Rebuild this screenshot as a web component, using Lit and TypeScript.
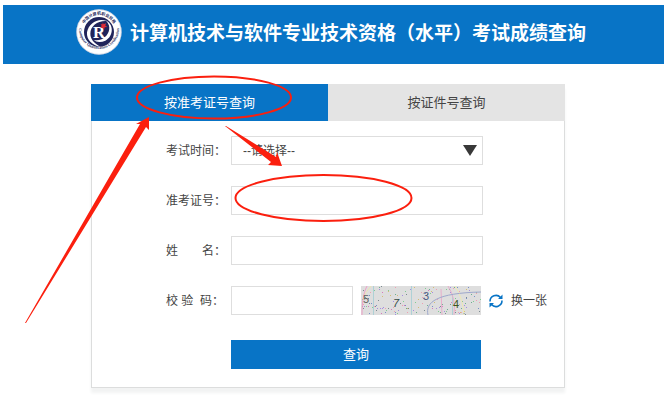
import { LitElement, html, css, svg } from "lit";
import { customElement, state } from "lit/decorators.js";

@customElement("site-emblem")
class SiteEmblem extends LitElement {
  static styles = css`
    :host { display: block; flex: none; width: 46px; height: 46px; }
    svg { display: block; width: 100%; height: 100%; }
    .ring { font: bold 12px "Noto Sans CJK SC", sans-serif; fill: #2a2d62; }
    .latin { font: bold 12px "Liberation Serif", serif; fill: #2a2d62; }
    .mono { font: bold 50px "Liberation Serif", serif; fill: #fff; }
  `;
  render() {
    return html`<svg viewBox="0 0 138 138" role="img" aria-label="计算机职业资格">
      <defs>
        <path id="upper" d="M20 58 A50 50 0 0 1 118 58" />
        <path id="lower" d="M9 60 A60 60 0 1 0 129 60" />
      </defs>
      <circle cx="69" cy="69" r="68" fill="#fff" />
      <circle cx="69" cy="69" r="67" fill="none" stroke="#7c8bb4" stroke-width="1" />
      <text class="ring"><textPath href="#upper" startOffset="50%" text-anchor="middle">中国计算机职业资格</textPath></text>
      <text class="latin"><textPath href="#lower" startOffset="50%" text-anchor="middle">Computer Qualification Certification</textPath></text>
      <circle cx="69" cy="69" r="45" fill="#20245a" />
      <path d="M92 36 C66 26 38 42 33 70 C31 92 48 110 74 114 C54 102 43 90 43 74 C43 50 66 34 92 36Z" fill="#fff" />
      <path d="M88 34 C114 44 114 82 88 95 C75 101 61 100 53 93 C66 96 80 92 91 80 C104 65 103 46 88 34Z" fill="#fff" />
      <text class="mono" x="51" y="87">R</text>
      <path d="M80 40 l3 6 7 -3 -2 7 6 4 -8 1 -2 7 -4 -6 -7 1 4 -6 -3 -5 6 0z" fill="#e02b35" />
    </svg>`;
  }
}

@customElement("captcha-picture")
class CaptchaPicture extends LitElement {
  static styles = css`
    :host { display: block; flex: none; width: 120px; height: 29px; }
    svg { display: block; width: 100%; height: 100%; background: #dedede; }
    text { font: 11px "Liberation Sans", sans-serif; }
    .slanted { font-style: italic; }
  `;
  private specks() {
    const tints = ["#d779bd", "#6cae91", "#7990c9", "#a68de0", "#d4bd75", "#7c8a90", "#ef9fb1", "#81cc92"];
    let seed = 4217;
    const next = () => (seed = (seed * 16807) % 2147483647) / 2147483647;
    return Array.from({ length: 150 }, () => {
      const x = Math.floor(next() * 120);
      const y = Math.floor(next() * 29);
      const tint = tints[Math.floor(next() * tints.length)];
      return svg`<rect x=${x} y=${y} width="1" height="1" fill=${tint} />`;
    });
  }
  render() {
    return html`<svg viewBox="0 0 120 29" role="img" aria-label="校验码图片">
      ${this.specks()}
      <g fill="none" stroke-width="1">
        <path d="M6 0 C2 8 1 18 1 29" stroke="#eda0c6" />
        <path d="M10 0 Q4 6 2 14" stroke="#ece5b3" />
        <path d="M12.500 0V29M50.500 0V29M91.500 8V29" stroke="#aed1d6" />
        <path d="M87 0 Q95 12 93 29M80 3L81 29" stroke="#e7aecb" />
        <path d="M94 0 Q102 12 103 29" stroke="#eee9b4" />
        <path d="M67 29 C64 16 76 7 120 6" stroke="#9ea8cc" />
      </g>
      <text x="2" y="17" fill="#606060">5</text>
      <text class="slanted" x="32" y="21" fill="#344c46">7</text>
      <text x="62" y="14" fill="#4e5b80">3</text>
      <text x="92" y="22" fill="#40561d">4</text>
    </svg>`;
  }
}

@customElement("app-root")
class AppRoot extends LitElement {
  @state() private tab = 0;

  static styles = css`
    :host {
      display: block;
      position: relative;
      background: #fff;
      color: #444;
      font: 12px/18px "Liberation Sans", "Noto Sans CJK SC", sans-serif;
    }
    * { box-sizing: border-box; }
    button, input, select { font: inherit; color: inherit; margin: 0; border-radius: 0; }
    button { border: 0; padding: 0; cursor: pointer; }
    .page { padding: 5px 7px 20px 3px; }
    .banner {
      display: flex;
      align-items: center;
      gap: 8px;
      height: 59px;
      padding: 0 16px 5px 73px;
      background: #0874c6;
      color: #fff;
    }
    .title { margin: 0; padding-top: 3px; font-size: 19px; line-height: 28px; font-weight: bold; white-space: nowrap; }
    .card {
      margin: 20px 99px 0 88px;
      border: 1px solid #dcdddd;
      border-top: 0;
      box-shadow: 0 5px 3px #f2f3f3;
    }
    .tabs { display: flex; margin: 0 -1px; }
    .tab { flex: 1; height: 37px; background: #e4e4e4; font-size: 13px; line-height: 36px; }
    .tab.active { background: #0874c6; color: #fff; }
    .form {
      display: grid;
      grid-template-columns: 60px minmax(0, 1fr) 59px;
      align-items: center;
      gap: 21px 5px;
      padding: 15px 17px 18px 74px;
    }
    .label { grid-column: 1; white-space: pre; }
    .field {
      grid-column: 2;
      width: 100%;
      height: 29px;
      padding: 0 11px;
      border: 1px solid #dedede;
      background: #fff;
      outline-color: #0874c6;
    }
    .picker { grid-column: 2; display: grid; align-items: center; }
    .picker > * { grid-area: 1 / 1; }
    .picker .field { appearance: none; }
    .caret { justify-self: end; margin-right: 6px; width: 14px; height: 11px; pointer-events: none; }
    .check { grid-column: 2 / -1; display: flex; align-items: center; gap: 8px; }
    .check .field { flex: 1; width: auto; min-width: 0; }
    .refresh { display: flex; align-items: center; gap: 8px; background: none; white-space: nowrap; }
    .refresh svg { width: 14px; height: 14px; }
    .submit {
      grid-column: 2;
      height: 29px;
      margin: 4px 2px 0 0;
      background: #0874c6;
      color: #fff;
      font-size: 13px;
    }
    .marks { position: absolute; left: 0; top: 0; width: 100%; pointer-events: none; }
  `;

  render() {
    return html`
      <div class="page">
        <header class="banner">
          <site-emblem></site-emblem>
          <h1 class="title">计算机技术与软件专业技术资格（水平）考试成绩查询</h1>
        </header>
        <main class="card">
          <div class="tabs" role="tablist">
            ${["按准考证号查询", "按证件号查询"].map(
              (name, i) => html`<button role="tab" class=${this.tab === i ? "tab active" : "tab"}
                aria-selected=${this.tab === i ? "true" : "false"} @click=${() => (this.tab = i)}>${name}</button>`
            )}
          </div>
          <form class="form" @submit=${(e: Event) => e.preventDefault()}>
            <label class="label" for="time">考试时间：</label>
            <div class="picker">
              <select class="field" id="time"><option>--请选择--</option></select>
              <svg class="caret" viewBox="0 0 14 11" aria-hidden="true"><path d="M0 0H14L7 11Z" fill="#383838" /></svg>
            </div>
            <label class="label" for="ticket">准考证号：</label>
            <input class="field" id="ticket" type="text" />
            <label class="label" for="name">姓　　名：</label>
            <input class="field" id="name" type="text" />
            <label class="label" for="code">校 验  码：</label>
            <div class="check">
              <input class="field" id="code" type="text" />
              <captcha-picture></captcha-picture>
              <button class="refresh" type="button">
                <svg viewBox="0 0 14 14" aria-hidden="true">
                  <path d="M1 7.500A6 6 0 0 1 11.500 3.500M13 6.500A6 6 0 0 1 2.500 10.500" fill="none" stroke="#0874c6" stroke-width="1.600" />
                  <path d="M13.500 .5V5H9ZM.5 13.500V9H5Z" fill="#0874c6" />
                </svg>
                换一张
              </button>
            </div>
            <button class="submit" type="submit">查询</button>
          </form>
        </main>
      </div>
      <svg class="marks" viewBox="0 0 671 414" aria-hidden="true">
        <g fill="none" stroke="#fb1f0e" stroke-width="2">
          <ellipse cx="214" cy="97.500" rx="77" ry="21" />
          <ellipse cx="323.500" cy="198" rx="88" ry="23" />
        </g>
        <g fill="#fb1f0e">
          <path d="M25 323L140 124L136 124L149 117L149 130L146 127L26 323Z" />
          <path d="M225 126L226 126L276 157L277 152L282 166L268 165L271 162Z" />
        </g>
      </svg>
    `;
  }
}
